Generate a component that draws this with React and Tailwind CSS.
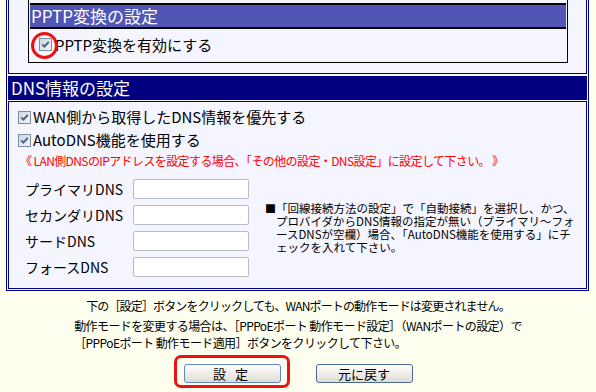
import React from 'react';

const JP = "font-['Noto_Sans_CJK_JP',sans-serif]";

function Check() {
  return (
    <span className="inline-flex h-[13px] w-[13px] shrink-0 items-center justify-center border border-[#7a8ea8] bg-linear-to-br from-[#d3d6db] to-[#f4f4f4]">
      <svg width="9" height="9" viewBox="0 0 9 9">
        <path d="M1.3 4.3 L3.4 6.6 L7.8 1.8" fill="none" stroke="#3f5f92" strokeWidth="1.9" />
      </svg>
    </span>
  );
}

const dnsRows = ['プライマリDNS', 'セカンダリDNS', 'サードDNS', 'フォースDNS'];

const App = () => {
  return (
    <div className={`relative h-[392px] w-[596px] overflow-hidden bg-[#fffff0] text-black ${JP}`}>
      <div className="-mt-[14px] ml-[6px] w-[583px] border border-[#000080] bg-[#f5f5ff] p-px">
        {/* PPTP */}
        <div className="border border-[#000080] pt-[10px] pb-[10px] pl-[19px] pr-[18px]">
          <div className="border border-black">
            <div className="mx-px mt-[3px] h-[26px] border-y-2 border-black bg-[#5156b6] pl-px text-[17px] leading-[21px] text-white">
              PPTP変換の設定
            </div>
            <div className="flex h-[33px] items-center pb-[2px] pl-[10px]">
              <Check />
              <span className="ml-[3px] text-[15px] leading-[20px]">PPTP変換を有効にする</span>
            </div>
          </div>
        </div>

        {/* DNS header */}
        <div className="mt-[2px] h-[24px] bg-[#000080] pl-[3px] text-[17px] leading-[23px] text-white">DNS情報の設定</div>

        {/* DNS body */}
        <div className="mt-px border border-[#000080] pt-[4px] pb-[8px]">
          <div className="flex h-[23px] items-center pb-px pl-[9px]">
            <Check />
            <span className="ml-[2px] text-[15px] leading-[20px]">WAN側から取得したDNS情報を優先する</span>
          </div>
          <div className="flex h-[23px] items-center pb-px pl-[9px]">
            <Check />
            <span className="ml-[2px] text-[15px] leading-[20px]">AutoDNS機能を使用する</span>
          </div>
          <div className="h-[18px] pl-[11px] text-[12px] leading-[18px] tracking-[-0.6px] text-[#ff0000]">
            《 LAN側DNSのIPアドレスを設定する場合、「その他の設定・DNS設定」に設定して下さい。 》
          </div>
          <div className="mt-[6px] flex items-center pl-[16px]">
            <div className="flex flex-col">
              {dnsRows.map((label) => (
                <div key={label} className="flex h-[26px] items-center">
                  <span className="w-[108px] text-[14px] leading-[20px]">{label}</span>
                  <span className="h-[20px] w-[116px] rounded-[2px] border border-[#b4bcc4] bg-white" />
                </div>
              ))}
            </div>
            <div className="ml-[16px] flex text-[11.5px] leading-[13px]">
              <span className="w-[11px] shrink-0 text-[11px]">■</span>
              <p className="whitespace-nowrap">
                「回線接続方法の設定」で「自動接続」を選択し、かつ、
                <br />
                プロバイダからDNS情報の指定が無い（プライマリ～フォ
                <br />
                ースDNSが空欄）場合、「AutoDNS機能を使用する」にチ
                <br />
                ェックを入れて下さい。
              </p>
            </div>
          </div>
        </div>
      </div>

      {/* footer note */}
      <div className="mt-[7px] flex flex-col items-center text-[12px] tracking-[-0.85px]">
        <p className="leading-[16px]">下の［設定］ボタンをクリックしても、WANポートの動作モードは変更されません。</p>
        <p className="mt-[3px] text-left leading-[17px] tracking-[-0.6px]">
          動作モードを変更する場合は、［PPPoEポート 動作モード設定］（WANポートの設定）で
          <br />
          ［PPPoEポート 動作モード適用］ボタンをクリックして下さい。
        </p>
      </div>

      <div className="mt-[13px] flex justify-center gap-[35px]">
        <button
          type="button"
          className="h-[19px] w-[97px] rounded-[3px] border border-[#5b87c9] bg-linear-to-b from-white to-[#dedcd2] text-[13px] leading-[16px] tracking-[3px]"
        >
          設 定
        </button>
        <button
          type="button"
          className="h-[19px] w-[97px] rounded-[3px] border border-[#4b6a93] bg-linear-to-b from-white to-[#dedcd2] text-[13px] leading-[16px]"
        >
          元に戻す
        </button>
      </div>

      {/* red annotation marks */}
      <div className="absolute left-[31px] top-[32px] h-[27px] w-[27px] rounded-full border-[3px] border-[#ee1111]" />
      <div className="absolute left-[174px] top-[355px] h-[33px] w-[116px] rounded-[7px] border-[3px] border-[#ee1111]" />
    </div>
  );
};

export default App;
